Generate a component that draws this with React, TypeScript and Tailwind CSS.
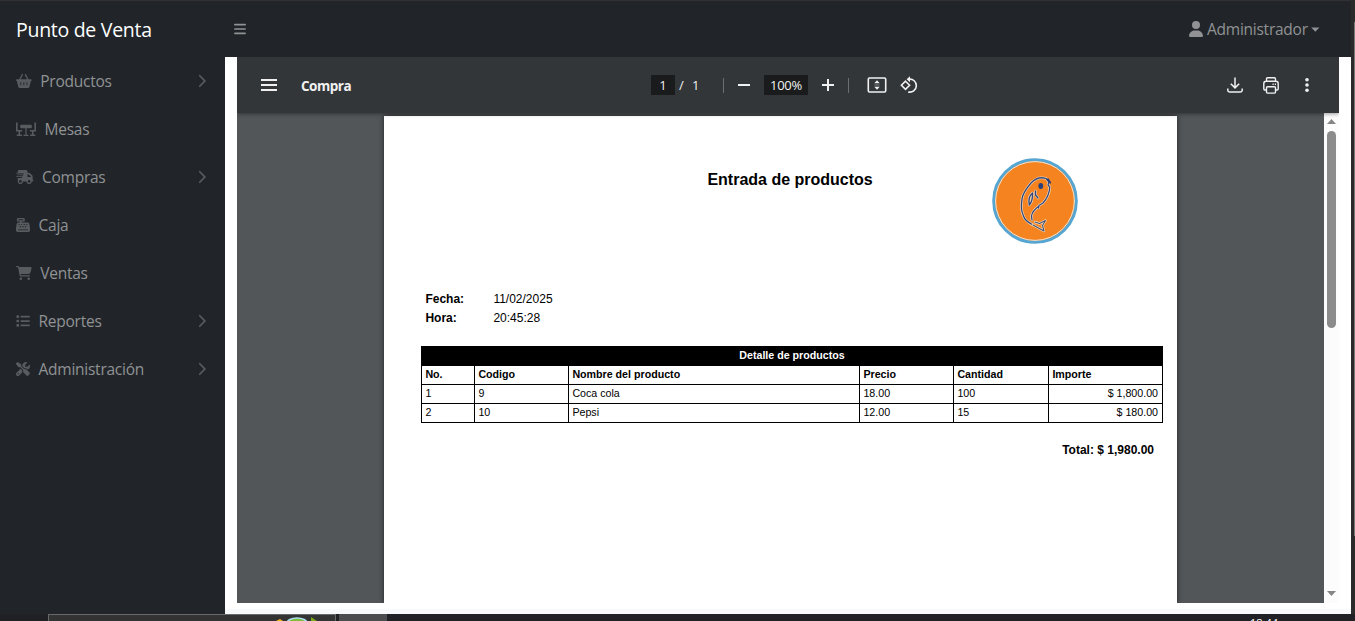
import React from "react";
import {
  FaBasketShopping,
  FaTruckFast,
  FaCashRegister,
  FaCartShopping,
  FaList,
  FaScrewdriverWrench,
  FaBars,
  FaUser,
  FaChevronRight,
} from "react-icons/fa6";

function TableIcon() {
  return (
    <svg width="20" height="14" viewBox="0 0 20 14" fill="currentColor">
      <path d="M0 0.5h1.6v7.4h4.6v1.6H4.1v3.1h1.8V14H0.7v-1.4h1.8V9.5H0z" />
      <path d="M20 0.5h-1.6v7.4h-4.6v1.6h2.1v3.1h-1.8V14h5.2v-1.4h-1.8V9.5H20z" />
      <path d="M5.2 2.8h9.6q1 0 1 1v1.4q0 1-1 1H5.2q-1 0-1-1V3.8q0-1 1-1z" />
      <path d="M9.4 6h1.2v6.7h1.9V14h-5v-1.3h1.9z" />
    </svg>
  );
}

interface MenuItem {
  label: string;
  icon: React.ReactNode;
  expandable: boolean;
}

const menu: MenuItem[] = [
  { label: "Productos", icon: <FaBasketShopping className="h-[14px] w-[15.75px]" />, expandable: true },
  { label: "Mesas", icon: <TableIcon />, expandable: false },
  { label: "Compras", icon: <FaTruckFast className="h-[14px] w-[17.5px]" />, expandable: true },
  { label: "Caja", icon: <FaCashRegister className="h-[14px] w-[14px]" />, expandable: false },
  { label: "Ventas", icon: <FaCartShopping className="h-[14px] w-[15.75px]" />, expandable: false },
  { label: "Reportes", icon: <FaList className="h-[14px] w-[14px]" />, expandable: true },
  { label: "Administración", icon: <FaScrewdriverWrench className="h-[14px] w-[14px]" />, expandable: true },
];

function Navbar() {
  return (
    <header className="flex h-[57px] shrink-0 items-center border-t border-[#313033] bg-[#212529]">
      <span className="w-[225px] pl-4 pt-0.5 text-[19.5px] tracking-[-0.28px] whitespace-nowrap text-white">Punto de Venta</span>
      <FaBars className="ml-[9px] h-[14px] w-[12px] text-[#909294]" />
      <div className="mr-[31px] ml-auto flex items-center text-[#909294]">
        <FaUser className="h-4 w-[14px]" />
        <span className="ml-[4px] w-[101px] pt-[2px] text-[15.5px] tracking-[-0.25px] whitespace-nowrap">Administrador</span>
        <svg className="ml-[3px]" width="9" height="5" viewBox="0 0 9 5" fill="currentColor">
          <path d="M0.2 0.5h8.2L4.3 4.7z" />
        </svg>
      </div>
    </header>
  );
}

function Sidebar() {
  return (
    <nav className="w-[225px] shrink-0 bg-[#212529]">
      {menu.map((m) => (
        <a key={m.label} className="flex h-12 items-center pr-[19px] pl-4 text-[15.5px] text-[#909294]">
          <span className="mr-[8.5px] text-[#595c5f]">{m.icon}</span>
          <span className="pt-[2px] tracking-[-0.25px]">{m.label}</span>
          {m.expandable && <FaChevronRight className="ml-auto h-[14px] w-[9px] text-[#595c5f]" />}
        </a>
      ))}
    </nav>
  );
}

function Toolbar() {
  return (
    <div className="z-10 flex h-14 shrink-0 items-center bg-[#323639] text-[13px] text-[#f1f1f1] shadow-[0_1px_4px_rgba(0,0,0,0.4)]">
      <div className="flex w-[414px] items-center pl-6">
        <svg width="16" height="12" viewBox="0 0 16 12" fill="currentColor">
          <path d="M0 0h16v2H0zM0 5h16v2H0zM0 10h16v2H0z" />
        </svg>
        <span className="ml-6 pt-[3px] text-[13.5px] font-bold tracking-[-0.5px]">Compra</span>
      </div>
      <span className="flex h-5 w-6 items-center justify-center bg-[#191b1c] pt-px">1</span>
      <span className="ml-[4px] w-[9px] pt-px">/</span>
      <span className="ml-[4px] w-[8px] pt-px">1</span>
      <span className="ml-[23px] h-[15px] w-px bg-[#6c6f71]" />
      <svg className="ml-[14px]" width="12" height="2" viewBox="0 0 12 2" fill="currentColor"><path d="M0 0h12v2H0z" /></svg>
      <span className="ml-[14px] flex h-5 w-11 items-center justify-center bg-[#191b1c] pt-px tracking-[-0.3px]">100%</span>
      <svg className="ml-[14px]" width="12" height="12" viewBox="0 0 12 12" fill="currentColor"><path d="M5 0h2v5h5v2H7v5H5V7H0V5h5z" /></svg>
      <span className="ml-[14px] h-[15px] w-px bg-[#6c6f71]" />
      <svg className="ml-[18px]" width="20" height="16" viewBox="0 0 20 16" fill="none" stroke="currentColor">
        <rect x="1.3" y="1" width="17.4" height="14" rx="1.2" strokeWidth="1.6" />
        <path d="M7.3 6.3L10 3.2L12.7 6.3zM7.3 9.7L10 12.8L12.7 9.7z" fill="currentColor" stroke="none" />
        <path d="M7.5 8h5" strokeWidth="0.8" opacity="0.5" />
      </svg>
      <svg className="ml-[13px]" width="18" height="18" viewBox="0 0 18 18" fill="none" stroke="currentColor" strokeWidth="1.6">
        <path d="M5.5 5.2L9.6 9.3L5.5 13.4L1.4 9.3z" />
        <path d="M8.8 3.2A6.5 6.5 0 1 1 8.2 15.9" />
        <path d="M6.6 3.3L10 0.3V6.3z" fill="currentColor" stroke="none" />
      </svg>
      <div className="mr-6 ml-auto flex items-center gap-5">
        <svg width="16" height="16" viewBox="0 0 16 16" fill="none" stroke="currentColor" strokeWidth="1.5">
          <path d="M8 0.5V10.5M3.8 6.7L8 10.9L12.2 6.7M0.8 11.5V13.3Q0.8 15 2.5 15H13.5Q15.2 15 15.2 13.3V11.5" />
        </svg>
        <svg width="16" height="17" viewBox="0 0 16 17" fill="none" stroke="currentColor" strokeWidth="1.4">
          <path d="M3.5 4V2Q3.5 0.8 4.7 0.8H11.3Q12.5 0.8 12.5 2V4M3.5 13H2Q0.8 13 0.8 11.8V6.5Q0.8 4.2 3 4.2H13Q15.2 4.2 15.2 6.5V11.8Q15.2 13 14 13H12.5" />
          <rect x="3.5" y="9.7" width="9" height="6.4" rx="1" />
          <path d="M9.5 7.2h1.2M11.8 7.2h1.2" />
        </svg>
        <svg width="16" height="16" viewBox="0 0 16 16" fill="currentColor">
          <circle cx="8" cy="2.8" r="1.8" />
          <circle cx="8" cy="8" r="1.8" />
          <circle cx="8" cy="13.2" r="1.8" />
        </svg>
      </div>
    </div>
  );
}

const fishBody =
  "M41 67C36 64.5 32.5 62 31.5 58C29 53 29 46 30.2 40C31 35 34 31 39 25C44 20 49 18.8 54 20.5L57 24L56 27L57.8 29C57.5 35 55.5 40 51 45L47 47.5L46.5 50M47 48C43 51 40 54 39.5 58L40 62";

function FishLogo() {
  return (
    <svg width="86" height="86" viewBox="0 0 86 86" fill="none" strokeLinecap="round" strokeLinejoin="round">
      <circle cx="43" cy="43" r="41.3" fill="#f5831f" stroke="#55a6d2" strokeWidth="3" />
      <circle cx="43" cy="43" r="39.4" stroke="#eee5d7" strokeWidth="1" />
      <path d={fishBody} stroke="#f8ddbd" strokeWidth="2.6" />
      <path d={fishBody} stroke="#344879" strokeWidth="1.3" />
      <path d="M43 64L47.5 65.5L53.5 62.5L50.5 67.5L52 73L41 67" stroke="#f8ddbd" strokeWidth="2.4" />
      <path d="M43 64L47.5 65.5L53.5 62.5L50.5 67.5L52 73L41 67" stroke="#475371" strokeWidth="1.1" />
      <ellipse cx="48.8" cy="28" rx="2.4" ry="3" fill="#283f79" />
      <path d="M40.5 35C37 38 36.5 43 37.3 47C40 44 40.7 40 40.5 35zM43.5 33L43.5 37L46 40" stroke="#f8ddbd" strokeWidth="2.6" />
      <path d="M40.5 35C37 38 36.5 43 37.3 47C40 44 40.7 40 40.5 35zM43.5 33L43.5 37L46 40" stroke="#344879" strokeWidth="1.4" />
      <path d="M56 21.5L58 24.5" stroke="#283f79" strokeWidth="2.2" />
    </svg>
  );
}

const rows = [
  ["1", "9", "Coca cola", "18.00", "100", "$ 1,800.00"],
  ["2", "10", "Pepsi", "12.00", "15", "$ 180.00"],
];
const heads = ["No.", "Codigo", "Nombre del producto", "Precio", "Cantidad", "Importe"];

function DetailTable() {
  return (
    <table className="ml-[37px] w-[742px] table-fixed border-collapse text-[10.67px] leading-none">
      <colgroup>
        <col className="w-[53px]" />
        <col className="w-[94px]" />
        <col className="w-[291px]" />
        <col className="w-[94px]" />
        <col className="w-[95px]" />
        <col />
      </colgroup>
      <tbody>
        <tr className="h-[19px] bg-black text-white">
          <th colSpan={6} className="border border-black p-0 pb-[2px] text-center font-bold">Detalle de productos</th>
        </tr>
        <tr className="h-[19px]">
          {heads.map((h) => (
            <th key={h} className="border border-black p-0 pb-[2px] pl-[3.4px] text-left font-bold">{h}</th>
          ))}
        </tr>
        {rows.map((r) => (
          <tr key={r[0]} className="h-[19px]">
            {r.map((c, i) => (
              <td key={i} className={i === 5 ? "border border-black p-0 pr-[4px] pb-[2px] text-right" : "border border-black p-0 pb-[2px] pl-[3.4px]"}>{c}</td>
            ))}
          </tr>
        ))}
      </tbody>
    </table>
  );
}

function PdfPage() {
  return (
    <div className="mt-[3px] ml-[147px] flex w-[793px] flex-col bg-white font-['Liberation_Sans',Arial,sans-serif] text-black shadow-[0_0_5px_rgba(0,0,0,0.6)]">
      <div className="flex h-[174px] pt-[42px]">
        <h1 className="mt-[10px] ml-[323.4px] w-[284.6px] text-[16px] font-bold whitespace-nowrap">Entrada de productos</h1>
        <FishLogo />
      </div>
      <div className="grid h-[56px] grid-cols-[68px_1fr] content-start pl-[41.4px] text-[12px] leading-[19px]">
        <b>Fecha:</b>
        <span>11/02/2025</span>
        <b>Hora:</b>
        <span>20:45:28</span>
      </div>
      <DetailTable />
      <p className="mt-[19px] pr-[23px] text-right text-[12px] leading-4 font-bold">Total: $ 1,980.00</p>
    </div>
  );
}

function Scrollbar() {
  return (
    <div className="flex w-[15px] shrink-0 flex-col items-center bg-[#fcfcfc]">
      <svg className="mt-[6px]" width="9" height="5" viewBox="0 0 9 5" fill="#858585"><path d="M4.5 0L9 5H0z" /></svg>
      <div className="mt-[7px] h-[197px] w-[9px] rounded-full bg-[#8b8b8b]" />
      <svg className="mt-auto mb-[7px]" width="9" height="5" viewBox="0 0 9 5" fill="#858585"><path d="M4.5 5L9 0H0z" /></svg>
    </div>
  );
}

function Taskbar() {
  return (
    <footer className="flex h-[7px] shrink-0 overflow-hidden bg-[#202124]">
      <div className="ml-12 flex w-[288px] justify-end border border-b-0 border-[#68696a] bg-[#333333] pr-[13px]">
        <svg width="48" height="6" viewBox="0 0 48 6">
          <path d="M2 6L6 4L9 6z" fill="#f4b51e" />
          <ellipse cx="23" cy="8" rx="10" ry="5" fill="#80bd3a" stroke="#a9def5" strokeWidth="1.5" />
          <path d="M37 2L43 6H37z" fill="#7ba817" />
        </svg>
      </div>
      <div className="ml-[3px] w-12 bg-[#4b4c4e]" />
      <span className="mt-[3px] ml-[863px] text-[11px] leading-[11px] whitespace-nowrap text-white">18:44</span>
    </footer>
  );
}

export default function App() {
  return (
    <div className="flex h-[621px] w-[1355px] flex-col overflow-hidden bg-[#202124] font-['Open_Sans','Noto_Sans',sans-serif]">
      <div className="flex h-[614px] shrink-0">
        <div className="flex w-[1351px] flex-col">
          <Navbar />
          <div className="flex min-h-0 flex-1">
            <Sidebar />
            <main className="flex flex-1 flex-col border-b-[5px] border-[#f8f9fa] bg-white px-3">
              <div className="flex h-[546px] flex-col overflow-hidden bg-[#525659]">
                <Toolbar />
                <div className="flex min-h-0 flex-1">
                  <div className="flex flex-1 overflow-hidden">
                    <PdfPage />
                  </div>
                  <Scrollbar />
                </div>
              </div>
            </main>
          </div>
        </div>
        <div className="flex w-1 justify-end bg-[#2b2b2b] pt-[22px]">
          <div className="h-[514px] w-px bg-[#777777]" />
        </div>
      </div>
      <Taskbar />
    </div>
  );
}
